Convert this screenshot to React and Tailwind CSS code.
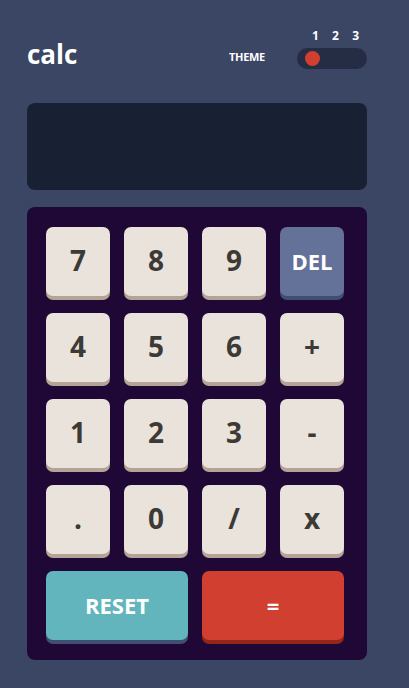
import React from "react";

const keys = [
  { label: "7" },
  { label: "8" },
  { label: "9" },
  { label: "DEL", kind: "del" },
  { label: "4" },
  { label: "5" },
  { label: "6" },
  { label: "+" },
  { label: "1" },
  { label: "2" },
  { label: "3" },
  { label: "-" },
  { label: "." },
  { label: "0" },
  { label: "/" },
  { label: "x" },
];

function Key({ label, kind }) {
  if (kind === "del") {
    return (
      <button className="h-[69px] rounded-[7px] bg-[#647198] text-[22px] font-bold text-white shadow-[0_4px_0_#414e73]">
        {label}
      </button>
    );
  }
  return (
    <button className="h-[69px] rounded-[7px] bg-[#eae3dc] pb-1 text-[28px] font-bold text-[#3b3a36] shadow-[0_4px_0_#b3a497]">
      {label}
    </button>
  );
}

export default function App() {
  return (
    <div
      className="min-h-[688px] w-full bg-[#3a4663] pt-[30px]"
      style={{ fontFamily: '"Open Sans", "Noto Sans", sans-serif' }}
    >
      <div className="ml-[27px] w-[340px]">
        {/* Header */}
        <header className="flex items-end justify-between">
          <h1 className="pb-[2px] text-[26px] font-bold leading-none text-white">calc</h1>
          <div className="flex items-end gap-[32px]">
            <span className="mb-[4px] text-[11px] font-bold tracking-tight text-white">THEME</span>
            <div className="flex flex-col">
              <div className="flex justify-between pl-[15px] pr-[8px] text-[12px] font-bold leading-none text-white">
                <span>1</span>
                <span>2</span>
                <span>3</span>
              </div>
              <div className="mt-[6px] flex h-[21px] w-[70px] items-center rounded-full bg-[#242d44] px-[8px]">
                <span className="h-[15px] w-[15px] rounded-full bg-[#d03f2f]" />
              </div>
            </div>
          </div>
        </header>

        {/* Screen */}
        <div className="mt-[34px] h-[87px] rounded-[8px] bg-[#182034]" />

        {/* Keypad */}
        <div className="mt-[17px] rounded-[8px] bg-[#1f0836] pb-[20px] pl-[19px] pt-[20px]">
          <div className="grid grid-cols-[repeat(4,64px)] gap-x-[14px] gap-y-[17px]">
            {keys.map((k) => (
              <Key key={k.label} {...k} />
            ))}
            <button className="col-span-2 h-[69px] rounded-[7px] bg-[#62b5bc] text-[22px] font-bold text-white shadow-[0_4px_0_#414e73]">
              RESET
            </button>
            <button className="col-span-2 h-[69px] rounded-[7px] bg-[#d03f2f] text-[22px] font-bold text-white shadow-[0_4px_0_#93261a]">
              =
            </button>
          </div>
        </div>
      </div>
    </div>
  );
}
